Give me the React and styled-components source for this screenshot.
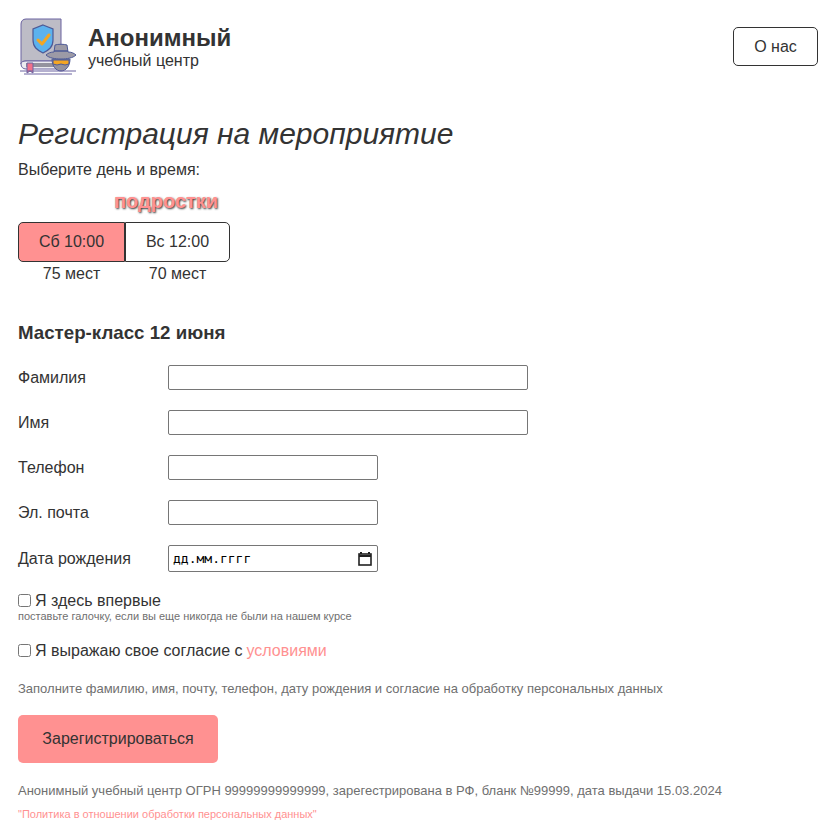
import React from 'react'
import styled, { createGlobalStyle } from 'styled-components'

const Global = createGlobalStyle`
  * { box-sizing: border-box; }
  body {
    margin: 0;
    background: #fff;
    color: #333;
    font-family: "Liberation Sans", Arial, sans-serif;
    font-size: 16px;
  }
`

const Page = styled.div`
  width: 831px;
  height: 832px;
  overflow: hidden;
  padding: 0 13px 0 18px;
`

const Header = styled.header`
  display: flex;
  align-items: flex-start;
  justify-content: space-between;
  height: 117px;
  padding-top: 17px;
`

const Brand = styled.div`
  display: flex;
  align-items: flex-start;
  gap: 11px;
  padding-left: 1px;
`

const BrandText = styled.div`
  padding-top: 7px;
  strong {
    display: block;
    font-size: 24px;
    line-height: 27px;
  }
  span {
    display: block;
    line-height: 19px;
  }
`

const AboutButton = styled.button`
  width: 85px;
  height: 39px;
  margin-top: 10px;
  border: 1px solid #333;
  border-radius: 5px;
  background: #fff;
  color: #333;
  font: inherit;
`

const Title = styled.h1`
  margin: 0;
  font-size: 30px;
  line-height: 34px;
  font-weight: 400;
  font-style: italic;
`

const Hint = styled.p`
  margin: 10px 0 0;
  line-height: 18px;
`

const Group = styled.div`
  margin-top: 11px;
  width: 212px;
  display: grid;
  grid-template-columns: 107px 105px;
`

const GroupTag = styled.div`
  grid-column: 1 / -1;
  height: 23px;
  padding-left: 96px;
  font-size: 20px;
  line-height: 23px;
  font-weight: 700;
  color: #ff9191;
  text-shadow: 1px 1px 2px #333;
  white-space: nowrap;
`

const Slot = styled.button`
  height: 40px;
  margin-top: 9px;
  padding: 0;
  border: 1px solid #333;
  background: ${({ $active }) => ($active ? '#ff9191' : '#fff')};
  color: #333;
  font: inherit;
  border-radius: ${({ $active }) => ($active ? '5px 0 0 5px' : '0 5px 5px 0')};
`

const Seats = styled.div`
  text-align: center;
  line-height: 18px;
  margin-top: 3px;
`

const FormTitle = styled.h2`
  margin: 39px 0 0;
  font-size: 18.72px;
  line-height: 21px;
  font-weight: 700;
`

const Row = styled.label`
  display: grid;
  grid-template-columns: 150px auto;
  justify-content: start;
  align-items: center;
  height: 25px;
  margin-top: ${({ $first }) => ($first ? '22px' : '20px')};
`

const Input = styled.input`
  display: block;
  width: ${({ $wide }) => ($wide ? '360px' : '210px')};
  height: 25px;
  padding: 1px 4px;
  border: 1px solid #767676;
  border-radius: 2px;
  background: #fff;
`

const DateBox = styled.div`
  display: flex;
  align-items: center;
  width: 210px;
  height: 27px;
  padding: 0 5px 0 4px;
  border: 1px solid #767676;
  border-radius: 2px;
  background: #fff;
`

const DateInput = styled.input`
  flex: 1;
  min-width: 0;
  border: 0;
  padding: 0;
  outline: 0;
  font-family: "DejaVu Sans Mono", monospace;
  font-size: 13px;
  &::placeholder {
    color: #000;
    opacity: 1;
  }
`

const Check = styled.label`
  display: flex;
  align-items: center;
  line-height: 18px;
  margin-top: ${({ $gap }) => $gap};
  input {
    width: 13px;
    height: 13px;
    margin: 0 4px 2px 0;
  }
`

const Small = styled.div`
  font-size: 11px;
  line-height: 12px;
  color: #6f6f6f;
`

const Conditions = styled.a`
  color: #ff9191;
  margin-left: 4px;
`

const Note = styled.p`
  margin: ${({ $gap }) => $gap} 0 0;
  font-size: 13px;
  line-height: 15px;
  color: #6f6f6f;
`

const Submit = styled.button`
  display: block;
  width: 200px;
  height: 48px;
  margin-top: 19px;
  border: 0;
  border-radius: 5px;
  background: #ff9191;
  color: #333;
  font: inherit;
`

const Policy = styled.a`
  display: block;
  margin-top: 10px;
  font-size: 11px;
  line-height: 13px;
  color: #ff9191;
`

const Logo = () => (
  <svg width="58" height="60" viewBox="0 0 58 60" fill="none">
    <path d="M7 2h35v42H7c-3 0-5 1-5 3V7c0-3 2-5 5-5z" fill="#bdbcc6" stroke="#6a62a0" />
    <path d="M2 47c0 3 2 5 5 5h35v-8H7c-3 0-5 1-5 3z" fill="#ecebf0" stroke="#6a62a0" />
    <path d="M7 46h34v4H7z" fill="#94929e" />
    <path d="M8 46h6v10l-3-2-3 2z" fill="#f2708a" stroke="#6a62a0" />
    <path d="M24 8l10 4v11c0 7-4 10-10 13-6-3-10-6-10-13V12z" fill="#5cb2ee" stroke="#4d5a96" strokeWidth="1.200" />
    <path d="M19 23l4 4 7-9" stroke="#f4a623" strokeWidth="3" strokeLinecap="round" strokeLinejoin="round" />
    <path d="M33 42c0 7 4 12 9 12s9-5 9-12z" fill="#94929e" stroke="#4d5a96" />
    <path d="M34 43h16v4l-4 1-4-1-4 1-4-1z" fill="#f4a623" stroke="#4d5a96" />
    <path d="M27 38c2-2 5-3 8-3l1-7c3-1 9-1 12 0l1 7c3 0 6 1 8 3-3 3-9 4-15 4s-12-1-15-4z" fill="#9c9aa6" stroke="#4d5a96" />
    <path d="M35 34h14" stroke="#4d5a96" strokeWidth="1.500" />
    <path d="M1 54h56M5 57h48" stroke="#6a62a0" />
  </svg>
)

const CalendarIcon = () => (
  <svg width="14" height="14" viewBox="0 0 14 14" fill="none">
    <path d="M3 0v2M11 0v2" stroke="#222" strokeWidth="2" />
    <rect x="1" y="2" width="12" height="11" stroke="#222" strokeWidth="1.600" />
    <path d="M1 3h12v2H1z" fill="#222" />
  </svg>
)

export default function App() {
  return (
    <Page>
      <Global />
      <Header>
        <Brand>
          <Logo />
          <BrandText>
            <strong>Анонимный</strong>
            <span>учебный центр</span>
          </BrandText>
        </Brand>
        <AboutButton>О нас</AboutButton>
      </Header>
      <Title>Регистрация на мероприятие</Title>
      <Hint>Выберите день и время:</Hint>
      <Group>
        <GroupTag>подростки</GroupTag>
        <Slot $active>Сб 10:00</Slot>
        <Slot>Вс 12:00</Slot>
        <Seats>75 мест</Seats>
        <Seats>70 мест</Seats>
      </Group>
      <FormTitle>Мастер-класс 12 июня</FormTitle>
      <Row $first>Фамилия<Input $wide /></Row>
      <Row>Имя<Input $wide /></Row>
      <Row>Телефон<Input /></Row>
      <Row>Эл. почта<Input /></Row>
      <Row>
        Дата рождения
        <DateBox>
          <DateInput placeholder="дд.мм.гггг" />
          <CalendarIcon />
        </DateBox>
      </Row>
      <Check $gap="22px"><input type="checkbox" />Я здесь впервые</Check>
      <Small>поставьте галочку, если вы еще никогда не были на нашем курсе</Small>
      <Check $gap="20px"><input type="checkbox" />Я выражаю свое согласие с<Conditions>условиями</Conditions></Check>
      <Note $gap="21px">Заполните фамилию, имя, почту, телефон, дату рождения и согласие на обработку персональных данных</Note>
      <Submit>Зарегистрироваться</Submit>
      <Note $gap="20px">Анонимный учебный центр ОГРН 99999999999999, зарегестрирована в РФ, бланк №99999, дата выдачи 15.03.2024</Note>
      <Policy>"Политика в отношении обработки персональных данных"</Policy>
    </Page>
  )
}
